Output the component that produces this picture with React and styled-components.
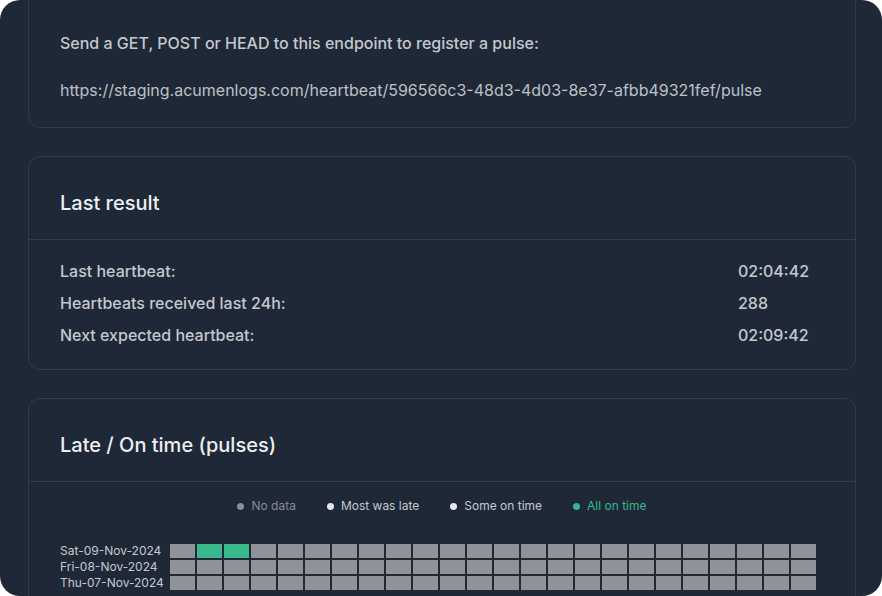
import React from "react";
import styled, { createGlobalStyle } from "styled-components";

const Global = createGlobalStyle`
  html, body { margin: 0; padding: 0; background: #ffffff; }
  body { font-family: Inter, "Noto Sans", sans-serif; -webkit-font-smoothing: antialiased; }
`;

const Window = styled.div`
  width: 882px;
  height: 596px;
  border-radius: 20px;
  overflow: hidden;
  background: #1f2836;
`;

const Stack = styled.div`
  display: flex;
  flex-direction: column;
  gap: 28px;
  margin-top: -20px;
  padding: 0 26px 0 28px;
`;

const Card = styled.section`
  border: 1px solid #313b4a;
  border-radius: 12px;
  background: #1f2836;
`;

const CardHeader = styled.div`
  padding: 32px 31px 22px;
  border-bottom: 1px solid #313b4a;
`;

const Title = styled.h2`
  margin: 0;
  font-size: 20px;
  line-height: 28px;
  font-weight: 500;
  color: #eceef1;
`;

const EndpointBody = styled.div`
  padding: 50px 31px 25px;
  display: flex;
  flex-direction: column;
  gap: 23px;
`;

const Lead = styled.p`
  margin: 0;
  font-size: 16px;
  line-height: 24px;
  font-weight: 500;
  color: #c4c8ce;
`;

const Url = styled.p`
  margin: 0;
  font-size: 16px;
  line-height: 24px;
  font-weight: 400;
  color: #bcc1c8;
`;

const ResultBody = styled.div`
  padding: 19px 31px 22px;
  display: grid;
  grid-template-columns: 1fr 86px;
  row-gap: 8px;
`;

const Cell = styled.div`
  font-size: 16px;
  line-height: 24px;
  font-weight: 500;
  color: #c4c8ce;
`;

const ChartBody = styled.div`
  padding: 16px 31px 20px;
`;

const Legend = styled.div`
  display: flex;
  justify-content: center;
  gap: 31px;
  margin-bottom: 30px;
`;

const LegendItem = styled.div`
  display: flex;
  align-items: center;
  gap: 7px;
  font-size: 12px;
  line-height: 16px;
  color: ${(p) => p.$text};
`;

const Dot = styled.span`
  width: 7px;
  height: 7px;
  border-radius: 50%;
  background: ${(p) => p.$color};
`;

const Grid = styled.div`
  display: grid;
  grid-template-columns: 108px repeat(24, 1fr);
  column-gap: 2px;
  row-gap: 2px;
  margin-right: 8px;
`;

const DayLabel = styled.div`
  font-size: 12px;
  line-height: 14px;
  color: #c4c8ce;
  white-space: nowrap;
`;

const Hour = styled.div`
  height: 14px;
  background: ${(p) => (p.$ok ? "#3ab78b" : "#8f9297")};
`;

const days = [
  { label: "Sat-09-Nov-2024", ok: [1, 2] },
  { label: "Fri-08-Nov-2024", ok: [] },
  { label: "Thu-07-Nov-2024", ok: [] },
];

const legend = [
  { label: "No data", dot: "#8b8f95", text: "#878c94" },
  { label: "Most was late", dot: "#e6e7e9", text: "#c4c8ce" },
  { label: "Some on time", dot: "#e6e7e9", text: "#c4c8ce" },
  { label: "All on time", dot: "#37b88a", text: "#37b88a" },
];

const results = [
  ["Last heartbeat:", "02:04:42"],
  ["Heartbeats received last 24h:", "288"],
  ["Next expected heartbeat:", "02:09:42"],
];

export default function App() {
  return (
    <>
      <Global />
      <Window>
        <Stack>
          <Card>
            <EndpointBody>
              <Lead>Send a GET, POST or HEAD to this endpoint to register a pulse:</Lead>
              <Url>https://staging.acumenlogs.com/heartbeat/596566c3-48d3-4d03-8e37-afbb49321fef/pulse</Url>
            </EndpointBody>
          </Card>

          <Card>
            <CardHeader>
              <Title>Last result</Title>
            </CardHeader>
            <ResultBody>
              {results.map(([k, v]) => (
                <React.Fragment key={k}>
                  <Cell>{k}</Cell>
                  <Cell>{v}</Cell>
                </React.Fragment>
              ))}
            </ResultBody>
          </Card>

          <Card>
            <CardHeader>
              <Title>Late / On time (pulses)</Title>
            </CardHeader>
            <ChartBody>
              <Legend>
                {legend.map((l) => (
                  <LegendItem key={l.label} $text={l.text}>
                    <Dot $color={l.dot} />
                    {l.label}
                  </LegendItem>
                ))}
              </Legend>
              <Grid>
                {days.map((d) => (
                  <React.Fragment key={d.label}>
                    <DayLabel>{d.label}</DayLabel>
                    {Array.from({ length: 24 }, (_, i) => (
                      <Hour key={i} $ok={d.ok.includes(i)} />
                    ))}
                  </React.Fragment>
                ))}
              </Grid>
            </ChartBody>
          </Card>
        </Stack>
      </Window>
    </>
  );
}
